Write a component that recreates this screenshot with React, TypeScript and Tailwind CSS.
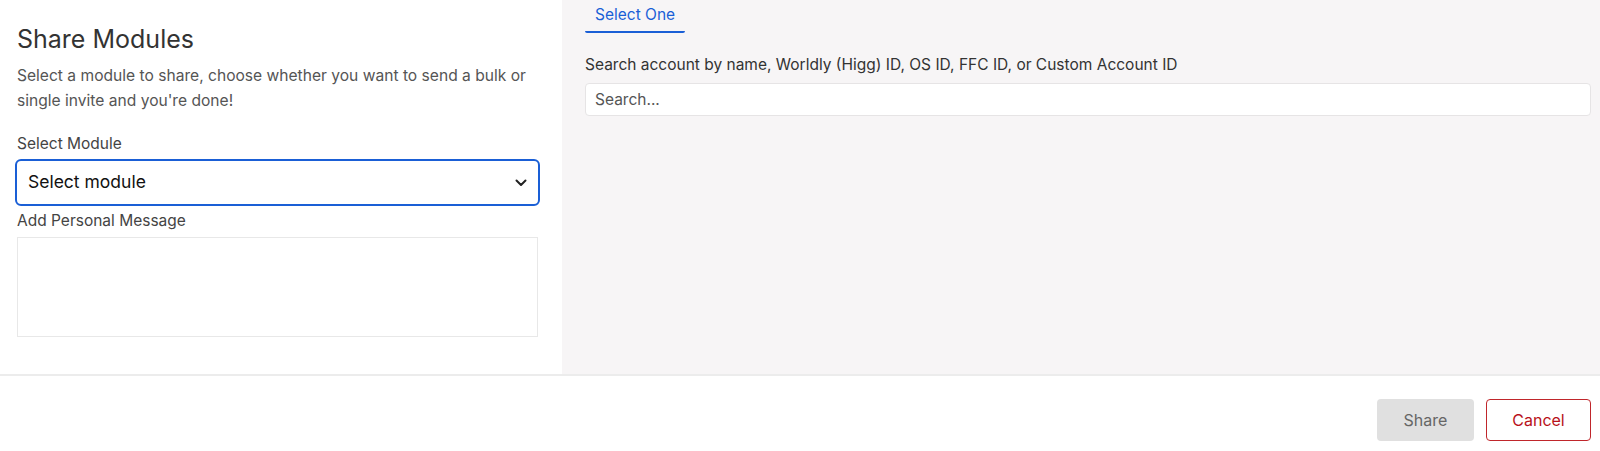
// Share Modules dialog — module picker on the left, account search on the right

const FONT = { fontFamily: 'Inter, "Noto Sans", sans-serif' };

function Chevron() {
  return (
    <svg width="12" height="8" viewBox="0 0 12 8" fill="none" aria-hidden="true">
      <path d="M1.5 1.5 6 6l4.5-4.5" stroke="#222" strokeWidth="2" strokeLinecap="round" strokeLinejoin="round" />
    </svg>
  );
}

export default function App() {
  return (
    <div className="w-[1600px] h-[451px] bg-white flex flex-col text-[#333]" style={FONT}>
      <div className="flex h-[374px]">
        {/* Left: module + message */}
        <section className="w-[562px] shrink-0 bg-white pt-[23px] pl-[17px] pr-[24px]">
          <h1 className="text-[25px] leading-[32px] text-[#333]">Share Modules</h1>
          <p className="mt-[8px] text-[15.6px] leading-[25px] text-[#555]">
            Select a module to share, choose whether you want to send a bulk or single invite and you're done!
          </p>

          <label className="block mt-[21px] text-[15.5px] leading-[20px] text-[#444]">Select Module</label>
          <div className="mt-[5px] -mx-[2px] h-[47px] rounded-[6px] border-2 border-[#1a5fd6] flex items-center justify-between pl-[11px] pr-[11px]">
            <span className="text-[17.5px] text-[#111]">Select module</span>
            <Chevron />
          </div>

          <label className="block mt-[5px] text-[15.5px] leading-[20px] text-[#444]">Add Personal Message</label>
          <div className="mt-[6px] h-[100px] border border-[#e8e8e8] bg-white" />
        </section>

        {/* Right: account search */}
        <section className="flex-1 bg-[#f7f5f6] pl-[23px] pr-[9px]">
          <div className="flex">
            <div className="px-[10px] pt-[5px] pb-[6px] border-b-2 border-[#1a5fd6] rounded-b-[2px] text-[15.5px] leading-[20px] text-[#1a5fd6]">
              Select One
            </div>
          </div>
          <label className="block mt-[22px] text-[15.5px] leading-[20px] text-[#333]">
            Search account by name, Worldly (Higg) ID, OS ID, FFC ID, or Custom Account ID
          </label>
          <div className="mt-[8px] h-[33px] rounded-[4px] border border-[#e6e4e5] bg-white flex items-center px-[9px]">
            <span className="text-[15.5px] text-[#555]">Search...</span>
          </div>
        </section>
      </div>

      {/* Footer actions */}
      <footer className="flex-1 border-t-2 border-[#ececec] flex items-start justify-end gap-[12px] pt-[23px] pr-[9px]">
        <button className="w-[97px] h-[42px] rounded-[4px] bg-[#e0e0e0] text-[16px] text-[#666]">Share</button>
        <button className="w-[105px] h-[42px] rounded-[4px] border border-[#c0262b] bg-white text-[16px] text-[#b8111a]">Cancel</button>
      </footer>
    </div>
  );
}
